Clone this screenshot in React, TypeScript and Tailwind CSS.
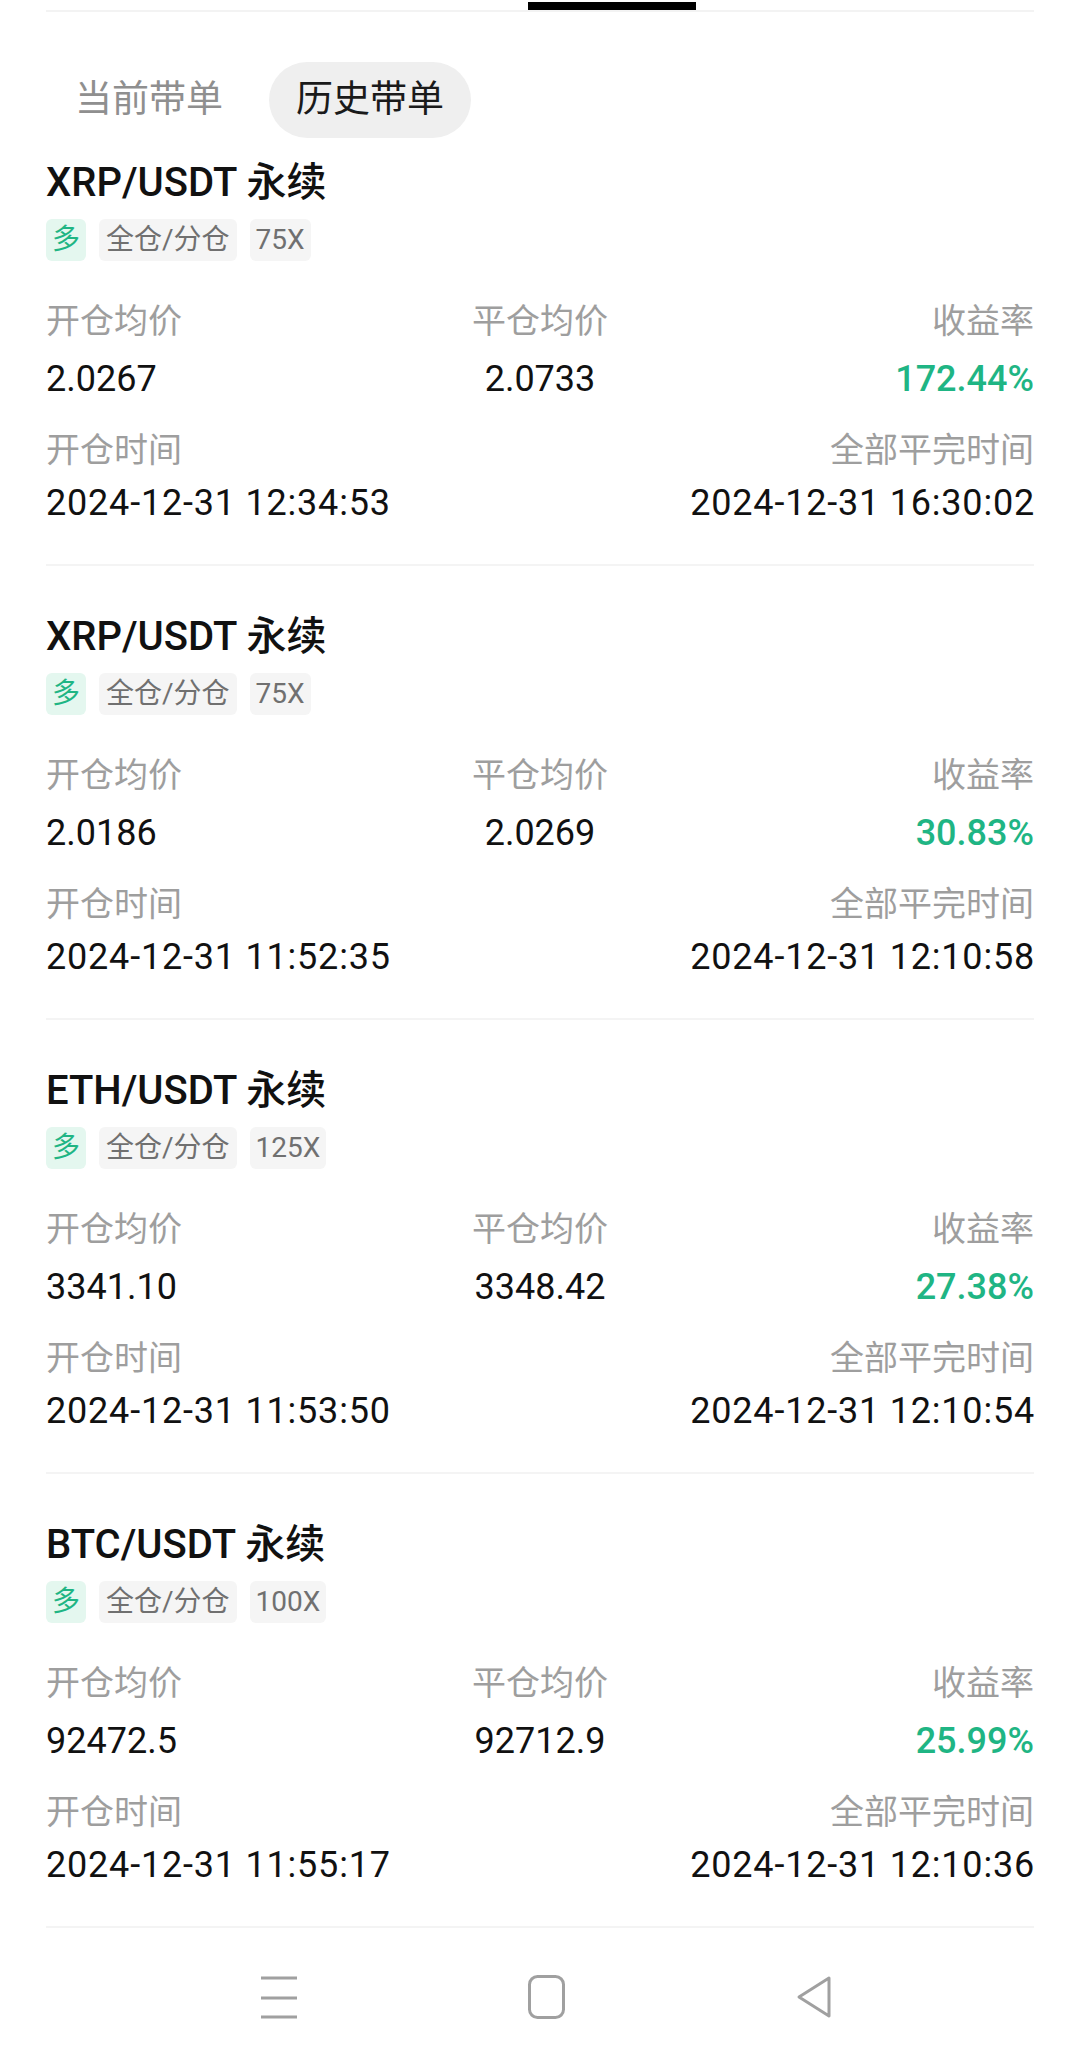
import React from "react";

interface Order {
  pair: string;
  lever: string;
  openPrice: string;
  closePrice: string;
  roi: string;
  openTime: string;
  closeTime: string;
}

const orders: Order[] = [
  {
    pair: "XRP/USDT 永续",
    lever: "75X",
    openPrice: "2.0267",
    closePrice: "2.0733",
    roi: "172.44%",
    openTime: "2024-12-31 12:34:53",
    closeTime: "2024-12-31 16:30:02",
  },
  {
    pair: "XRP/USDT 永续",
    lever: "75X",
    openPrice: "2.0186",
    closePrice: "2.0269",
    roi: "30.83%",
    openTime: "2024-12-31 11:52:35",
    closeTime: "2024-12-31 12:10:58",
  },
  {
    pair: "ETH/USDT 永续",
    lever: "125X",
    openPrice: "3341.10",
    closePrice: "3348.42",
    roi: "27.38%",
    openTime: "2024-12-31 11:53:50",
    closeTime: "2024-12-31 12:10:54",
  },
  {
    pair: "BTC/USDT 永续",
    lever: "100X",
    openPrice: "92472.5",
    closePrice: "92712.9",
    roi: "25.99%",
    openTime: "2024-12-31 11:55:17",
    closeTime: "2024-12-31 12:10:36",
  },
];

function OrderCard({ order, first }: { order: Order; first: boolean }) {
  return (
    <div
      className={
        (first ? "pt-[17px]" : "pt-[43px]") +
        " pb-[37px] border-b-2 border-[#f4f4f4]"
      }
    >
      <div className="h-[56px] leading-[56px] text-[40px] font-medium text-[#111]">
        {order.pair}
      </div>
      <div className="mt-[8px] flex gap-[13px] h-[42px]">
        <span className="rounded-[6px] px-[6px] text-[28px] leading-[42px] bg-[#e4f7ef] text-[#1fb584]">
          多
        </span>
        <span className="rounded-[6px] px-[7px] text-[28px] leading-[42px] bg-[#f5f5f5] text-[#707070]">
          全仓/分仓
        </span>
        <span className="rounded-[6px] px-[6px] text-[28px] leading-[42px] bg-[#f5f5f5] text-[#707070]">
          {order.lever}
        </span>
      </div>

      <div className="mt-[36px] grid grid-cols-3">
        <div className="text-[34px] leading-[48px] text-[#9e9e9e]">开仓均价</div>
        <div className="text-[34px] leading-[48px] text-[#9e9e9e] text-center">平仓均价</div>
        <div className="text-[34px] leading-[48px] text-[#9e9e9e] text-right">收益率</div>
      </div>
      <div className="mt-[10px] grid grid-cols-3">
        <div className="text-[36px] leading-[48px] text-[#111]">{order.openPrice}</div>
        <div className="text-[36px] leading-[48px] text-[#111] text-center">{order.closePrice}</div>
        <div className="text-[36px] leading-[48px] text-[#1fb584] font-medium text-right">{order.roi}</div>
      </div>

      <div className="mt-[23px] flex justify-between text-[34px] leading-[48px] text-[#9e9e9e]">
        <span>开仓时间</span>
        <span>全部平完时间</span>
      </div>
      <div className="mt-[5px] flex justify-between text-[36px] leading-[48px] text-[#111] tracking-[0.8px]">
        <span>{order.openTime}</span>
        <span className="-mr-[1px]">{order.closeTime}</span>
      </div>
    </div>
  );
}

export default function App() {
  return (
    <div
      className="w-[1080px] h-[2059px] bg-white overflow-hidden flex flex-col"
      style={{ fontFamily: 'Roboto, "Noto Sans CJK SC", sans-serif' }}
    >
      <div className="px-[46px]">
        <div className="h-[10px] pt-[2px]">
          <div className="ml-[482px] w-[168px] h-[8px] bg-black" />
        </div>
        <div className="h-[2px] bg-[#f3f3f3]" />

        <div className="mt-[50px] flex gap-[19px]">
          <div className="ml-[2px] h-[76px] px-[27px] rounded-full flex items-center text-[37px] text-[#8f8f8f]">
            当前带单
          </div>
          <div className="h-[76px] px-[27px] rounded-full flex items-center text-[37px] text-[#1a1a1a] bg-[#efefef]">
            历史带单
          </div>
        </div>

        {orders.map((o, i) => (
          <OrderCard key={i} order={o} first={i === 0} />
        ))}
      </div>

      <div className="flex-1 flex items-center pl-[261px] pt-[6px] gap-[231px] text-[#a0a0a0]">
        <svg width="36" height="44" viewBox="0 0 36 44" fill="none" stroke="currentColor" strokeWidth="3">
          <line x1="0" y1="3" x2="36" y2="3" />
          <line x1="0" y1="23" x2="36" y2="23" />
          <line x1="0" y1="42" x2="36" y2="42" />
        </svg>
        <svg width="37" height="44" viewBox="0 0 37 44" fill="none" stroke="currentColor" strokeWidth="3">
          <rect x="1.5" y="1.5" width="34" height="41" rx="8" />
        </svg>
        <svg width="36" height="44" viewBox="0 0 36 44" fill="none" stroke="currentColor" strokeWidth="3" strokeLinejoin="round">
          <path d="M33 3 L3 22 L33 41 Z" />
        </svg>
      </div>
    </div>
  );
}
